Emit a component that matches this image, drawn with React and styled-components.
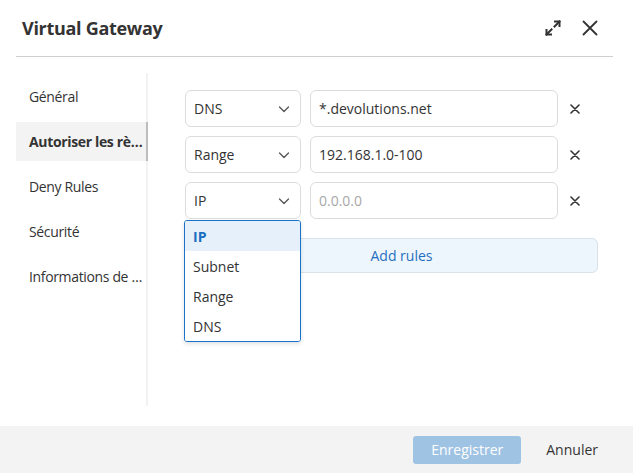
import React from "react";
import styled, { createGlobalStyle } from "styled-components";

const Global = createGlobalStyle`
  html, body { margin: 0; padding: 0; }
  body {
    font-family: "Open Sans", "Noto Sans", sans-serif;
    color: #333;
    background: #fff;
  }
  * { box-sizing: border-box; }
`;

const Dialog = styled.div`
  width: 633px;
  height: 473px;
  display: flex;
  flex-direction: column;
  background: #fff;
  overflow: hidden;
`;

const Header = styled.div`
  height: 57px;
  margin: 0 20px 0 16px;
  padding-left: 6px;
  border-bottom: 1px solid #cfcfcf;
  display: flex;
  align-items: center;
  flex-shrink: 0;
`;

const Title = styled.h1`
  margin: 0;
  font-size: 18px;
  font-weight: 700;
  color: #333;
  flex: 1;
  letter-spacing: -0.3px;
`;

const HeaderActions = styled.div`
  display: flex;
  align-items: center;
  gap: 15px;
  padding-right: 12px;
`;

const IconBtn = styled.button`
  border: 0;
  background: none;
  padding: 0;
  width: 22px;
  height: 22px;
  display: flex;
  align-items: center;
  justify-content: center;
  color: #333;
  cursor: pointer;
`;

const Body = styled.div`
  flex: 1;
  display: flex;
  padding: 16px 35px 20px 16px;
  min-height: 0;
`;

const Sidebar = styled.nav`
  width: 132px;
  border-right: 2px solid #f2f2f2;
  padding-top: 4px;
  display: flex;
  flex-direction: column;
  gap: 6px;
  flex-shrink: 0;
`;

const NavItem = styled.div`
  height: 39px;
  line-height: 39px;
  padding: 0 1px 0 13px;
  margin-right: -2px;
  font-size: 14px;
  letter-spacing: -0.35px;
  font-weight: ${(p) => (p.$active ? 700 : 400)};
  color: #333;
  background: ${(p) => (p.$active ? "#f3f3f3" : "transparent")};
  border-right: 2px solid ${(p) => (p.$active ? "#bdbdbd" : "transparent")};
  white-space: nowrap;
  overflow: hidden;
  text-overflow: ellipsis;
`;

const Content = styled.div`
  flex: 1;
  padding: 17px 0 0 37px;
  position: relative;
`;

const Rows = styled.div`
  display: flex;
  flex-direction: column;
  gap: 9px;
`;

const Row = styled.div`
  display: flex;
  align-items: center;
  position: relative;
`;

const Select = styled.div`
  width: 116px;
  height: 37px;
  border: 1px solid #dcdcdc;
  border-radius: 6px;
  display: flex;
  align-items: center;
  justify-content: space-between;
  padding: 0 9px 0 8px;
  font-size: 14px;
  color: #333;
  margin-right: 9px;
  flex-shrink: 0;
`;

const Input = styled.div`
  flex: 1;
  height: 37px;
  border: 1px solid #dcdcdc;
  border-radius: 6px;
  display: flex;
  align-items: center;
  padding: 0 8px;
  font-size: 14px;
  color: ${(p) => (p.$placeholder ? "#a8a8a8" : "#333")};
`;

const RemoveBtn = styled.button`
  width: 40px;
  height: 37px;
  border: 0;
  background: none;
  padding: 0 6px 0 0;
  display: flex;
  align-items: center;
  justify-content: center;
  color: #333;
  flex-shrink: 0;
`;

const AddButton = styled.button`
  margin-top: 19px;
  width: 100%;
  height: 35px;
  border: 1px solid #d9e1e9;
  border-radius: 6px;
  background: #eef6fd;
  color: #1f6fbf;
  font-family: inherit;
  font-size: 14px;
  padding-left: 26px;
  display: block;
`;

const Menu = styled.div`
  position: absolute;
  top: 38px;
  left: -1px;
  width: 117px;
  background: #fff;
  border: 1px solid #1a73c8;
  border-radius: 3px;
  box-shadow: 0 2px 4px rgba(0, 0, 0, 0.12);
  z-index: 10;
  overflow: hidden;
`;

const MenuItem = styled.div`
  height: 30px;
  display: flex;
  align-items: center;
  padding-left: 8px;
  font-size: 14px;
  font-weight: ${(p) => (p.$selected ? 700 : 400)};
  color: ${(p) => (p.$selected ? "#1a6fc0" : "#333")};
  background: ${(p) => (p.$selected ? "#e6f0fa" : "#fff")};
`;

const Footer = styled.div`
  height: 47px;
  background: #f3f3f3;
  display: flex;
  align-items: center;
  justify-content: flex-end;
  padding-right: 23px;
  gap: 13px;
  flex-shrink: 0;
`;

const PrimaryBtn = styled.button`
  width: 108px;
  height: 28px;
  border: 0;
  border-radius: 3px;
  background: #9fc3e3;
  color: #fff;
  font-family: inherit;
  font-size: 14px;
`;

const TextBtn = styled.button`
  border: 0;
  background: none;
  font-family: inherit;
  font-size: 14px;
  color: #333;
  padding: 0 12px;
  height: 28px;
`;

const Chevron = () => (
  <svg width="14" height="14" viewBox="0 0 14 14" fill="none">
    <path d="M2.5 5 L7 9.5 L11.5 5" stroke="#555" strokeWidth="1.3" strokeLinecap="round" strokeLinejoin="round" />
  </svg>
);

const SmallX = () => (
  <svg width="10" height="10" viewBox="0 0 10 10" fill="none">
    <path d="M1 1 L9 9 M9 1 L1 9" stroke="#333" strokeWidth="1.6" strokeLinecap="round" />
  </svg>
);

const ExpandIcon = () => (
  <svg width="18" height="18" viewBox="0 0 18 18" fill="none" stroke="#333" strokeWidth="2" strokeLinecap="square">
    <path d="M11 2.5 H15.5 V7" />
    <path d="M15.5 2.5 L10.5 7.5" />
    <path d="M7 15.5 H2.5 V11" />
    <path d="M2.5 15.5 L7.5 10.5" />
  </svg>
);

const CloseIcon = () => (
  <svg width="18" height="18" viewBox="0 0 18 18" fill="none">
    <path d="M2.5 2.5 L15.5 15.5 M15.5 2.5 L2.5 15.5" stroke="#333" strokeWidth="1.8" strokeLinecap="round" />
  </svg>
);

const rules = [
  { type: "DNS", value: "*.devolutions.net" },
  { type: "Range", value: "192.168.1.0-100" },
  { type: "IP", value: "0.0.0.0", placeholder: true, open: true },
];

const nav = [
  { label: "Général" },
  { label: "Autoriser les règles", active: true },
  { label: "Deny Rules" },
  { label: "Sécurité" },
  { label: "Informations de connexion" },
];

export default function App() {
  return (
    <>
      <Global />
      <Dialog>
        <Header>
          <Title>Virtual Gateway</Title>
          <HeaderActions>
            <IconBtn aria-label="Agrandir"><ExpandIcon /></IconBtn>
            <IconBtn aria-label="Fermer"><CloseIcon /></IconBtn>
          </HeaderActions>
        </Header>
        <Body>
          <Sidebar>
            {nav.map((n) => (
              <NavItem key={n.label} $active={n.active}>{n.label}</NavItem>
            ))}
          </Sidebar>
          <Content>
            <Rows>
              {rules.map((r, i) => (
                <Row key={i}>
                  <Select>
                    <span>{r.type}</span>
                    <Chevron />
                  </Select>
                  <Input $placeholder={r.placeholder}>{r.value}</Input>
                  <RemoveBtn aria-label="Supprimer"><SmallX /></RemoveBtn>
                  {r.open && (
                    <Menu>
                      <MenuItem $selected>IP</MenuItem>
                      <MenuItem>Subnet</MenuItem>
                      <MenuItem>Range</MenuItem>
                      <MenuItem>DNS</MenuItem>
                    </Menu>
                  )}
                </Row>
              ))}
            </Rows>
            <AddButton>Add rules</AddButton>
          </Content>
        </Body>
        <Footer>
          <PrimaryBtn>Enregistrer</PrimaryBtn>
          <TextBtn>Annuler</TextBtn>
        </Footer>
      </Dialog>
    </>
  );
}
